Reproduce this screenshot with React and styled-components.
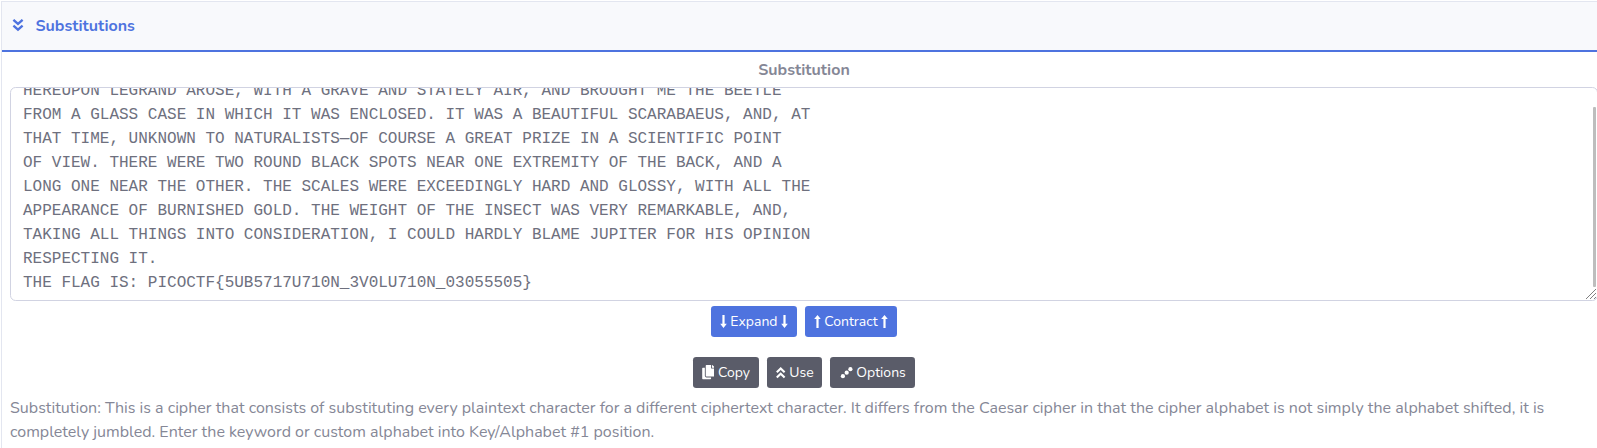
import React from 'react';
import styled, { createGlobalStyle } from 'styled-components';
import { FaCopy } from 'react-icons/fa';

const GlobalStyle = createGlobalStyle`
  * { box-sizing: border-box; }
  html, body { margin: 0; background: #fff; overflow: hidden; }
  body { font: 400 16px/24px Nunito, Lato, sans-serif; color: #858796; }
`;
const Page = styled.div`
  height: 448px;
  overflow: hidden;
  padding: 1px 0 0 1px;
`;
const Card = styled.section`
  width: 1606px;
  height: 600px;
  border: 1px solid #e3e6f0;
  background: #fff;
`;
const Header = styled.header`
  height: 50px;
  padding: 0 10px;
  display: flex;
  align-items: center;
  gap: 11.5px;
  background: #f8f9fc;
  border-bottom: 2px solid #4e73df;
  color: #4e73df;
`;
const Heading = styled.h6`
  margin: 0;
  font-size: 16px;
  font-weight: 700;
`;
const Body = styled.div`
  padding: 6px 8px;
  display: flex;
  flex-direction: column;
`;
const Label = styled.label`
  text-align: center;
  font-weight: 700;
  height: 29px;
`;
const Output = styled.div`
  position: relative;
  height: 214px;
  border: 1px solid #d1d3e2;
  border-radius: 5.6px;
  padding: 5px 12px;
  display: flex;
  flex-direction: column;
  justify-content: flex-end;
  overflow: hidden;
`;
const Text = styled.pre`
  margin: 0;
  font: 16px/24px "Liberation Mono", monospace;
  color: #6e707e;
`;
const Thumb = styled.div`
  position: absolute;
  right: 1px;
  top: 19px;
  width: 3px;
  height: 180px;
  border-radius: 1px;
  background: #bdbdbd;
`;
const Grip = styled.svg`
  position: absolute;
  right: 0;
  bottom: 1px;
`;
const Actions = styled.div`
  display: flex;
  justify-content: center;
  gap: 8px;
  margin-top: ${(p) => p.$top}px;
`;
const Button = styled.button`
  width: ${(p) => p.$width}px;
  height: 31px;
  padding: 0 0 0 8.5px;
  border: 0;
  border-radius: 3.2px;
  display: flex;
  align-items: center;
  gap: 3.8px;
  font: 400 14px/21px Nunito, Lato, sans-serif;
  color: #fff;
  background: ${(p) => (p.$dark ? '#5a5c69' : '#4e73df')};

  svg { flex: none; }
`;
const CopyIcon = styled(FaCopy)`
  width: 12.8px;
  height: 14.2px;
`;
const Description = styled.p`
  margin: 8px 0 0;
`;
const Line = styled.span`
  display: block;
  white-space: nowrap;
`;

const OUTPUT = `HEREUPON LEGRAND AROSE, WITH A GRAVE AND STATELY AIR, AND BROUGHT ME THE BEETLE
FROM A GLASS CASE IN WHICH IT WAS ENCLOSED. IT WAS A BEAUTIFUL SCARABAEUS, AND, AT
THAT TIME, UNKNOWN TO NATURALISTS—OF COURSE A GREAT PRIZE IN A SCIENTIFIC POINT
OF VIEW. THERE WERE TWO ROUND BLACK SPOTS NEAR ONE EXTREMITY OF THE BACK, AND A
LONG ONE NEAR THE OTHER. THE SCALES WERE EXCEEDINGLY HARD AND GLOSSY, WITH ALL THE
APPEARANCE OF BURNISHED GOLD. THE WEIGHT OF THE INSECT WAS VERY REMARKABLE, AND,
TAKING ALL THINGS INTO CONSIDERATION, I COULD HARDLY BLAME JUPITER FOR HIS OPINION
RESPECTING IT.
THE FLAG IS: PICOCTF{5UB5717U710N_3V0LU710N_03055505}`;

const ChevronsDown = () => (
  <svg width="12" height="14" viewBox="0 0 12 14" fill="none" stroke="currentColor" strokeWidth="2.3">
    <path d="M1.4.8 6 4.9 10.6.8M1.4 6.6 6 10.7l4.6-4.1" />
  </svg>
);

const ChevronsUp = () => (
  <svg width="10" height="14" viewBox="0 0 10 14" fill="none" stroke="currentColor" strokeWidth="2.1">
    <path d="M.8 6.3 4.7 2.4l3.9 3.9M.8 11.6l3.9-3.9 3.9 3.9" />
  </svg>
);

const ArrowDown = () => (
  <svg width="7" height="14" viewBox="0 0 7 14" fill="currentColor">
    <path d="M2.4 0h2.2v8.8h2.2L3.5 12.9.2 8.8h2.2z" />
  </svg>
);

const ArrowUp = () => (
  <svg width="7" height="14" viewBox="0 0 7 14" fill="currentColor">
    <path d="M2.4 12.9h2.2V4.1h2.2L3.5 0 .2 4.1h2.2z" />
  </svg>
);

const DotsIcon = () => (
  <svg width="14" height="14" viewBox="0 0 14 14" fill="currentColor">
    <circle cx="3.9" cy="10.2" r="2.1" />
    <circle cx="7.7" cy="6.7" r="2.1" />
    <circle cx="11.4" cy="3.2" r="2.1" />
  </svg>
);

export default function App() {
  return (
    <Page>
      <GlobalStyle />
      <Card>
        <Header>
          <ChevronsDown />
          <Heading>Substitutions</Heading>
        </Header>
        <Body>
          <Label>Substitution</Label>
          <Output>
            <Text>{OUTPUT}</Text>
            <Thumb />
            <Grip width="11" height="10" viewBox="0 0 11 10" stroke="#808080" fill="none">
              <path d="M0 10 10 0M4 10l6-6M8 10l2-2" />
            </Grip>
          </Output>
          <Actions $top={5}>
            <Button $width={86}><ArrowDown />Expand<ArrowDown /></Button>
            <Button $width={92}><ArrowUp />Contract<ArrowUp /></Button>
          </Actions>
          <Actions $top={20}>
            <Button $dark $width={66}><CopyIcon />Copy</Button>
            <Button $dark $width={55}><ChevronsUp />Use</Button>
            <Button $dark $width={85}><DotsIcon />Options</Button>
          </Actions>
          <Description>
            <Line>Substitution: This is a cipher that consists of substituting every plaintext character for a different ciphertext character. It differs from the Caesar cipher in that the cipher alphabet is not simply the alphabet shifted, it is</Line>
            <Line>completely jumbled. Enter the keyword or custom alphabet into Key/Alphabet #1 position.</Line>
          </Description>
        </Body>
      </Card>
    </Page>
  );
}
